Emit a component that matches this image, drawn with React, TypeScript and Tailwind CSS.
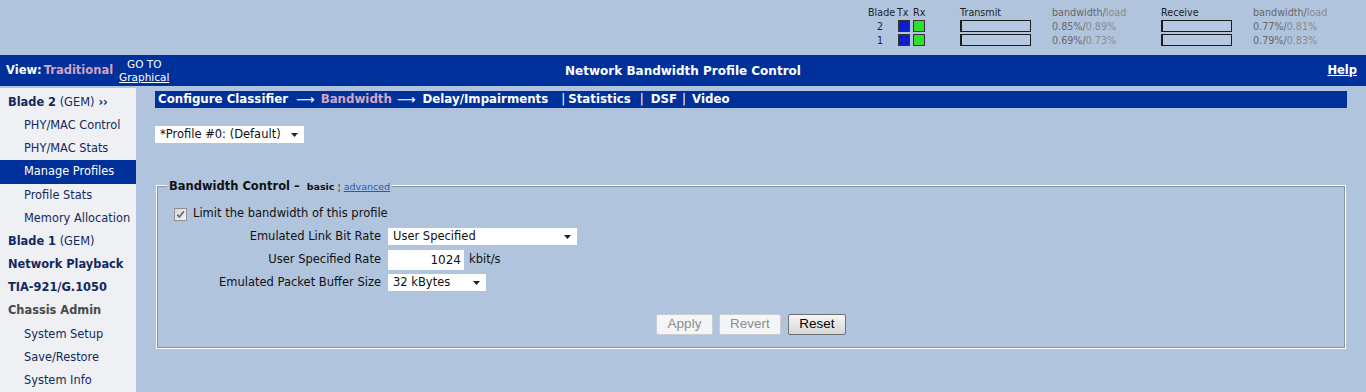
import React from "react";

const sideItems = [
  { kind: "head", bold: "Blade 2", rest: " (GEM)", tail: " ››" },
  { kind: "sub", label: "PHY/MAC Control" },
  { kind: "sub", label: "PHY/MAC Stats" },
  { kind: "sub", label: "Manage Profiles", active: true },
  { kind: "sub", label: "Profile Stats" },
  { kind: "sub", label: "Memory Allocation" },
  { kind: "head", bold: "Blade 1", rest: " (GEM)" },
  { kind: "head", bold: "Network Playback" },
  { kind: "head", bold: "TIA-921/G.1050" },
  { kind: "admin", bold: "Chassis Admin" },
  { kind: "sub", label: "System Setup" },
  { kind: "sub", label: "Save/Restore" },
  { kind: "sub", label: "System Info" },
];

const rows = [
  { blade: "2", tx: "0.85%", txl: "0.89%", rx: "0.77%", rxl: "0.81%" },
  { blade: "1", tx: "0.69%", txl: "0.73%", rx: "0.79%", rxl: "0.83%" },
];

function Arrow() {
  return (
    <svg width="7" height="4" viewBox="0 0 7 4" className="shrink-0">
      <path d="M0 0h7L3.5 4z" fill="#222" />
    </svg>
  );
}

function Bar() {
  return (
    <div className="flex h-[12px] w-[71px] border border-[#1c1c1c] bg-[#b6c8e0]">
      <div className="w-[1px] bg-[#1c1c1c]" />
    </div>
  );
}

function Square({ color }: { color: string }) {
  return <div className={`h-[12px] w-[12px] border border-[#333] ${color}`} />;
}

function StatusBlock() {
  return (
    <div className="flex justify-end pr-[10px] pt-[6px] text-[9.6px] leading-[13px] text-[#222]">
      <div className="grid w-[488px] grid-cols-[30px_15px_47px_92px_109px_92px_1fr] grid-rows-[13px_14px_14px] items-center">
        <div>Blade</div>
        <div className="-ml-[1px]">Tx</div>
        <div>Rx</div>
        <div>Transmit</div>
        <div className="text-[#666]">
          bandwidth/<span className="text-[#8a8a8a]">load</span>
        </div>
        <div>Receive</div>
        <div className="text-[#666]">
          bandwidth/<span className="text-[#8a8a8a]">load</span>
        </div>
        {rows.map((r) => (
          <React.Fragment key={r.blade}>
            <div className="pl-[9px]">{r.blade}</div>
            <div>
              <Square color="bg-[#0a1ed0]" />
            </div>
            <div>
              <Square color="bg-[#2ee02e]" />
            </div>
            <div>
              <Bar />
            </div>
            <div className="text-[#666]">
              {r.tx}/<span className="text-[#8a8a8a]">{r.txl}</span>
            </div>
            <div>
              <Bar />
            </div>
            <div className="text-[#666]">
              {r.rx}/<span className="text-[#8a8a8a]">{r.rxl}</span>
            </div>
          </React.Fragment>
        ))}
      </div>
    </div>
  );
}

function Header() {
  return (
    <div className="grid h-[31px] grid-cols-[1fr_auto_1fr] items-center bg-[#00309a] text-white">
      <div className="flex items-center pl-[6px]">
        <span className="text-[11.5px] font-bold">View:</span>
        <span className="ml-[2px] text-[11.5px] font-bold text-[#d2a4c4]">Traditional</span>
        <div className="ml-[6px] flex flex-col items-center text-[10.5px] leading-[13px]">
          <span>GO TO</span>
          <span className="underline">Graphical</span>
        </div>
      </div>
      <div className="text-[12px] font-bold">Network Bandwidth Profile Control</div>
      <div className="flex justify-end pr-[9px]">
        <span className="text-[11.5px] font-bold underline">Help</span>
      </div>
    </div>
  );
}

function Sidebar() {
  return (
    <div className="flex w-[136px] shrink-0 flex-col bg-[#eef0f3] pt-[3px] text-[11.4px]">
      {sideItems.map((it, i) => {
        if (it.kind === "sub") {
          return (
            <div
              key={i}
              className={`flex h-[23.5px] items-center pl-[24px] ${
                it.active ? "bg-[#00309a] text-white" : "text-[#12295e]"
              }`}
            >
              {it.label}
            </div>
          );
        }
        return (
          <div
            key={i}
            className={`flex h-[23.5px] items-center pl-[8px] ${
              it.kind === "admin" ? "text-[#4a4a4a]" : "text-[#12295e]"
            }`}
          >
            <span className="font-bold">{it.bold}</span>
            {it.rest && <span className="whitespace-pre">{it.rest}</span>}
            {it.tail && <span className="whitespace-pre font-bold">{it.tail}</span>}
          </div>
        );
      })}
    </div>
  );
}

function NavBar() {
  return (
    <div className="flex h-[17px] items-center bg-[#00309a] pl-[3px] text-[11.8px] font-bold text-white">
      <span>Configure Classifier</span>
      <span className="ml-[8px] text-[13px] font-normal">⟶</span>
      <span className="ml-[6px] text-[#d4a6c6]">Bandwidth</span>
      <span className="ml-[5px] text-[13px] font-normal">⟶</span>
      <span className="ml-[7px]">Delay/Impairments</span>
      <span className="ml-[13px] font-normal">|</span>
      <span className="ml-[3px]">Statistics</span>
      <span className="ml-[9px] font-normal">|</span>
      <span className="ml-[7px]">DSF</span>
      <span className="ml-[5px] font-normal">|</span>
      <span className="ml-[6px]">Video</span>
    </div>
  );
}

function Select({ text, w }: { text: string; w: string }) {
  return (
    <div className={`flex h-[17px] items-center justify-between bg-white pl-[5px] pr-[6px] text-[11.5px] text-[#111] ${w}`}>
      <span>{text}</span>
      <Arrow />
    </div>
  );
}

function Checkbox() {
  return (
    <div className="flex h-[13px] w-[13px] items-center justify-center border border-[#8f8f8f] bg-gradient-to-br from-[#d8d8d8] to-[#f2f2f2]">
      <svg width="9" height="9" viewBox="0 0 9 9">
        <path d="M1.2 4.6 3.4 7 7.8 1.4" fill="none" stroke="#5d6f8f" strokeWidth="1.7" />
      </svg>
    </div>
  );
}

function BandwidthControl() {
  return (
    <fieldset className="mx-[2px] mt-[35px] border border-[#8a929e] p-0 pb-[12px] shadow-[0_0_0_1px_#ffffff]">
      <legend className="ml-[9px] bg-[#b0c4de] px-[2px] leading-[14px]">
        <span className="text-[11.5px] font-bold text-[#111]">Bandwidth Control – </span>
        <span className="ml-[3px] text-[9.5px] font-bold text-[#111]">basic</span>
        <span className="mx-[3px] text-[9.5px] text-[#333]">¦</span>
        <span className="text-[9.5px] text-[#1d5bb8] underline">advanced</span>
      </legend>
      <div className="flex flex-col text-[11.5px] text-[#111]">
        <div className="mt-[12px] flex h-[16px] items-center pl-[16px]">
          <Checkbox />
          <span className="ml-[6px]">Limit the bandwidth of this profile</span>
        </div>
        <div className="mt-[3px] flex h-[23px] items-center">
          <div className="w-[223px] text-right">Emulated Link Bit Rate</div>
          <div className="ml-[7px]">
            <Select text="User Specified" w="w-[189px]" />
          </div>
        </div>
        <div className="flex h-[23px] items-center">
          <div className="w-[223px] text-right">User Specified Rate</div>
          <div className="ml-[7px] flex h-[20px] w-[76px] items-center justify-end bg-white pr-[3px] text-[12px]">
            1024
          </div>
          <span className="ml-[5px]">kbit/s</span>
        </div>
        <div className="flex h-[23px] items-center">
          <div className="w-[223px] text-right">Emulated Packet Buffer Size</div>
          <div className="ml-[7px]">
            <Select text="32 kBytes" w="w-[98px]" />
          </div>
        </div>
        <div className="mt-[20px] flex justify-center gap-[6px] font-['Liberation_Sans',Arial,sans-serif] text-[13.5px]">
          <div className="flex h-[21px] w-[57px] items-center justify-center rounded-[2px] border border-[#c9cdd4] bg-[#f4f5f6] text-[#8c8c8c]">
            Apply
          </div>
          <div className="flex h-[21px] w-[62px] items-center justify-center rounded-[2px] border border-[#c9cdd4] bg-[#f4f5f6] text-[#8c8c8c]">
            Revert
          </div>
          <div className="ml-[1px] flex h-[21px] w-[58px] items-center justify-center rounded-[2px] border border-[#707070] bg-gradient-to-b from-[#f6f6f6] to-[#d6d6d6] text-black">
            Reset
          </div>
        </div>
      </div>
    </fieldset>
  );
}

export default function App() {
  return (
    <div className="h-[392px] w-[1366px] overflow-hidden bg-[#b0c4de] font-['DejaVu_Sans',Verdana,sans-serif]">
      <div className="h-[55px]">
        <StatusBlock />
      </div>
      <Header />
      <div className="mt-[2px] flex h-[304px]">
        <Sidebar />
        <div className="flex-1 px-[19px] pt-[3px]">
          <NavBar />
          <div className="mt-[18px]">
            <Select text="*Profile #0: (Default)" w="w-[149px]" />
          </div>
          <BandwidthControl />
        </div>
      </div>
    </div>
  );
}
